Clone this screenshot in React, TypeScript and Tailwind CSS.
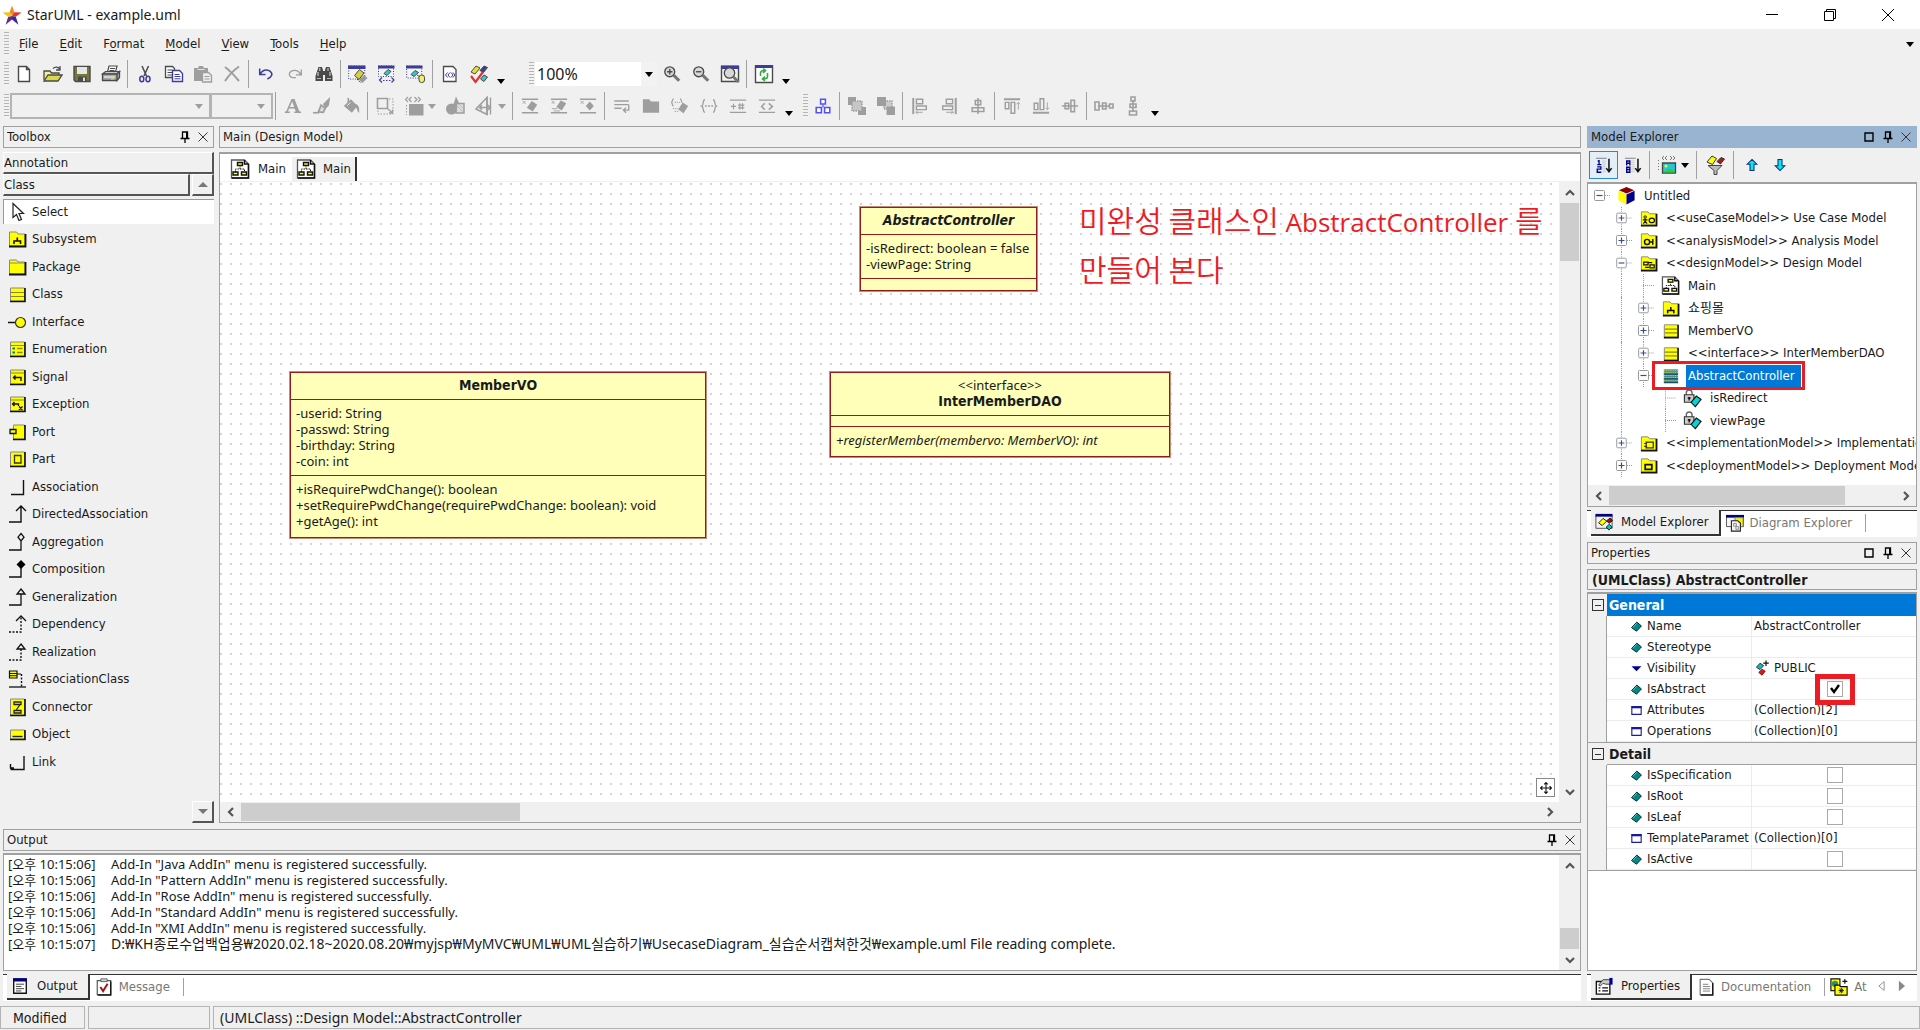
import React from 'react';

/* ---------- icon building blocks ---------- */

type Kids = { children?: React.ReactNode; size?: string };

function Svg({ children, size = 'size-5' }: Kids) {
  return (
    <svg viewBox="0 0 20 20" fill="none" className={`${size} shrink-0`} aria-hidden="true">
      {children}
    </svg>
  );
}

const G = '#9e9e9e';
const D = '#4a4a4a';
const N = '#3c3c9c';
const Y = '#ffff00';

const icons: Record<string, React.ReactNode> = {
  new: <path d="M4.5 2.5h8l3 3v12h-11zM12.5 2.5v3h3" fill="#fff" stroke={D} strokeWidth="1.4" />,
  open: (
    <>
      <path d="M1 16V7h6l1.5 2H16v3" fill="#f2ee9a" stroke={D} strokeWidth="1.3" />
      <path d="M1 17l4-6h14l-4 6z" fill="#d8d84a" stroke={D} strokeWidth="1.3" />
      <path d="M10 4.500c2-2 5-2 6.500.5M17 2v4h-4" stroke={D} strokeWidth="1.3" />
    </>
  ),
  save: (
    <>
      <path d="M2 2.500h16v15H3.500L2 16z" fill="#77773c" stroke={D} strokeWidth="1.4" />
      <path d="M5 3h10v7H5z" fill="#e6e6e6" />
      <path d="M6 12.500h8.500V17H6z" fill={D} />
      <path d="M11 13.500h2V17h-2z" fill="#ddd" />
    </>
  ),
  print: (
    <>
      <path d="M6.500 8l1.500-6h8l-1.500 6z" fill="#fff" stroke={D} strokeWidth="1.2" />
      <path d="M9 4.500h5M8.500 6.500h5" stroke={D} />
      <path d="M1.500 10l3-2.500h14L16 10z" fill="#c8c8c8" stroke={D} strokeWidth="1.2" />
      <path d="M1.500 10h14.500v6.500H1.500zM16 10l2.500-2.500v6L16 16.500z" fill="#a8a8a8" stroke={D} strokeWidth="1.3" />
      <path d="M3 13h11" stroke="#eee" strokeWidth="1.200" />
      <path d="M10 14.800h3" stroke="#d8d83a" strokeWidth="1.500" />
    </>
  ),
  cut: (
    <>
      <path d="M7 2l4.500 10M13.500 2L9 12" stroke={D} strokeWidth="1.500" />
      <ellipse cx="6.800" cy="15" rx="2" ry="2.800" stroke={N} strokeWidth="1.500" />
      <ellipse cx="13" cy="15" rx="2" ry="2.800" stroke={N} strokeWidth="1.500" />
    </>
  ),
  copy: (
    <>
      <path d="M1.500 2.500h7l2 2v9h-9z" fill="#fff" stroke={D} strokeWidth="1.300" />
      <path d="M3.500 6h5M3.500 8.500h5M3.500 11h5" stroke={D} />
      <path d="M8.500 6.500h7l3 3v8h-10z" fill="#fff" stroke={N} strokeWidth="1.400" />
      <path d="M10.500 10.500h5M10.500 12.500h6M10.500 14.800h6" stroke={N} />
    </>
  ),
  paste: (
    <>
      <path d="M1 4h4l1-2h4l1 2h4v13H1z" fill={G} />
      <path d="M4.500 5.500h7" stroke="#e4e4e4" />
      <path d="M9.500 8.500h6l3 3v6.500h-9z" fill="#ececec" stroke={G} strokeWidth="1.300" />
      <path d="M11.500 12.500h5M11.500 15h5" stroke={G} />
    </>
  ),
  delete: <path d="M3 3c4 3 9 8 14 14M17 2.500C12 6 7 11 3 17" stroke={G} strokeWidth="2" />,
  undo: <path d="M3 4v6.500h6.500M3.500 10C6 6 10 4.500 14 6.500c4.500 3 2.500 7-2.500 9" stroke={N} strokeWidth="1.700" />,
  redo: <path d="M17 5v6h-6M16.500 10.500C14 6.500 10 5 6 6.800c-3.500 2-3 6 1 7.200h4" stroke={G} strokeWidth="1.500" />,
  find: (
    <>
      <path d="M4.500 3h3.500l1 3v11H1.500v-5zM15.500 3H12l-1 3v11h7.500v-5z" fill={D} />
      <path d="M8 7h4v4H8z" fill={D} />
      <path d="M4 8v4M16 8v4M5.800 4v3M14 4v3" stroke="#ddd" />
      <path d="M3 14.500h4M13 14.500h4" stroke="#bbb" />
    </>
  ),
  win1: (
    <>
      <path d="M.7 2h16v13H.7z" fill="#f4f4f4" stroke={N} strokeDasharray="1 1.500" />
      <path d="M0 1.500h17.500V5H0z" fill={N} />
      <path d="M11 16l5-5 3.500 3-5 5z" fill="#9a9a9a" />
      <path d="M6.500 11.500l5-6 4.500 3.500-5 6.500z" fill="#d6d13c" stroke={D} />
      <path d="M9 15l4 4" stroke={D} strokeDasharray="1.500 1" />
    </>
  ),
  win2: (
    <>
      <path d="M1.500 2h15v10.500h-15z" fill="#f4f4f4" stroke={N} strokeDasharray="1 1.500" />
      <path d="M1 1.500h16.500V4.500H1z" fill={N} />
      <path d="M7 9.500l4-4 3 2-4 4z" fill="#3ec6c6" stroke={D} />
      <path d="M5 13.500l-2.500 2.500L5 18.500M14.500 13.500L17 16l-2.500 2.500" stroke={N} strokeWidth="1.200" />
      <path d="M6 16.500h8" stroke={N} strokeDasharray="1.500 1.500" />
    </>
  ),
  win3: (
    <>
      <path d="M.7 2h15v12H.7z" fill="#f4f4f4" stroke={N} strokeDasharray="1 1.500" />
      <path d="M0 1.500h16.500V4.500H0z" fill={N} />
      <path d="M5 10.500l4-4 3.500 2-4.500 4z" fill="#3ec6c6" stroke={D} />
      <path d="M11 11l6 4" stroke={D} />
      <rect x="13" y="11" width="5.500" height="7.500" rx="2.500" fill="#f1ee6a" stroke={D} />
    </>
  ),
  doc: (
    <>
      <path d="M3.500 2.500h9.500l3 3v12H3.500z" fill="#fff" stroke={D} strokeWidth="1.300" />
      <path d="M7.500 8.500L5.500 11l2 2.500M10 8.500L8 11l2 2.500M11 8.500l2 2.500-2 2.500M13 8.500l2 2.500-2 2.500" stroke={N} />
    </>
  ),
  verify: (
    <>
      <path d="M2 8l5-6 4 2-5 6z" fill="#e5e02e" stroke={D} />
      <path d="M11 6.500l4-4.500 3.500 1.500-4 5z" fill={N} stroke={D} />
      <path d="M11.500 15l3.500-4 3.500 2-3.500 4.500z" fill="#3ec6c6" stroke={D} />
      <path d="M2 12l4.500 6L14 8" stroke="#e03030" strokeWidth="2.200" />
    </>
  ),
  zoomin: (
    <>
      <circle cx="7.500" cy="7.500" r="5.500" fill="#d8d8d8" stroke={D} strokeWidth="1.500" />
      <path d="M4.500 7.500h6M7.500 4.500v6" stroke={D} strokeWidth="1.500" />
      <path d="M12 11.500l6 6" stroke="#777" strokeWidth="3.500" />
    </>
  ),
  zoomout: (
    <>
      <circle cx="7.500" cy="7.500" r="5.500" fill="#d8d8d8" stroke={D} strokeWidth="1.500" />
      <path d="M4.500 7.500h6" stroke={D} strokeWidth="1.500" />
      <path d="M12 11.500l6 6" stroke="#777" strokeWidth="3.500" />
    </>
  ),
  zoomfit: (
    <>
      <path d="M1.500 2.500h17v15h-17z" fill="#f4f4f4" stroke={D} strokeWidth="1.400" />
      <path d="M1 1.500h18V5H1z" fill={N} />
      <circle cx="9.500" cy="9" r="5.200" fill="#d8d8d8" stroke={D} strokeWidth="1.300" />
      <path d="M13.500 13l5 5" stroke="#777" strokeWidth="3" />
    </>
  ),
  refresh: (
    <>
      <path d="M1.500 2h17v16.500h-17z" fill="#fff" stroke={D} strokeWidth="1.400" />
      <path d="M1 1h18v3H1z" fill={N} />
      <path
        d="M6.500 12V9c0-2 2-2.500 4-2.500M9 4.500l2.500 2L9 9M13.500 9v3.500c0 2-2 2.500-4 2.500M11 12.500L8.500 15l2.500 2"
        stroke="#35a845"
        strokeWidth="1.600"
      />
    </>
  ),
  font: (
    <>
      <path d="M3 17L9 3h2l5.500 14M6 12h8" stroke={G} strokeWidth="1.800" />
      <path d="M10 3l5 14" stroke={G} strokeWidth="3" />
      <path d="M1 17h5.500M11.500 17h7.500" stroke={G} strokeWidth="1.800" />
    </>
  ),
  pen: (
    <>
      <path d="M12 8l6-6-1 7-3 3z" fill={G} stroke={G} strokeWidth="1.500" />
      <path d="M9 9l4.500 3.500-2 4.500-5.500-.5z" fill="#ddd" stroke={G} strokeWidth="2" />
      <path d="M0 17.500h7" stroke={G} strokeWidth="1.800" />
    </>
  ),
  bucket: (
    <>
      <path d="M2 10l8-7.500 7 7.500-6 7.500z" fill={G} />
      <path d="M7 1v8" stroke={G} strokeWidth="1.800" />
      <path d="M15 8c3 1 4 3.500 3.500 9L16 11z" fill={G} stroke={G} />
      <path d="M5.500 10l4-4" stroke="#eee" />
    </>
  ),
  resize: (
    <>
      <path d="M2.500 2.500h10v10h-10z" stroke={G} strokeWidth="1.600" />
      <path d="M14 3h4v15H3v-4" stroke={G} strokeDasharray="1.500 1.500" />
      <path d="M13 13l4.500 4M17.500 13.500V17H14" stroke={G} strokeWidth="1.300" />
    </>
  ),
  stereo: (
    <>
      <path
        d="M4 1L1.500 3.500 4 6M7.500 1L5 3.500 7.500 6M10.500 1L13 3.500 10.500 6M14 1l2.500 2.500L14 6"
        stroke={G}
        strokeWidth="1.200"
      />
      <path d="M5 8h14.500v11.500H5z" fill={G} />
      <path d="M2.500 9v10" stroke={G} strokeDasharray="1.500 1.500" />
    </>
  ),
  shapes: (
    <>
      <circle cx="6.500" cy="13" r="5.500" fill={G} />
      <path d="M11 .5l5 10.500H7.500z" fill={G} />
      <path d="M11.500 7.500h7.500V17h-8z" fill="#ddd" stroke={G} strokeWidth="1.500" />
      <path d="M12 10l6 6M14 8.500l4 4" stroke={G} strokeDasharray="1 1" />
    </>
  ),
  rotate: (
    <>
      <path d="M13 1.500L2 13l11 5.500z" stroke={G} strokeWidth="1.600" />
      <path d="M13 1v18" stroke={G} strokeWidth="1.600" />
      <path d="M16.500 1.500v17" stroke={G} strokeWidth="1.400" />
      <path d="M6 11.500h10M8 9l-2.500 2.500L8 14M14 9l2.500 2.500L14 14" stroke={G} strokeWidth="1.400" />
    </>
  ),
  sup1: (
    <>
      <path d="M1 2.500h18M1 17.500h18" stroke={G} strokeWidth="1.500" />
      <path d="M2 4.500l3 3M5 4.500l-3 3" stroke={G} />
      <path d="M6.500 12l5.500-7.500 6 4-5 7.500z" fill={G} />
    </>
  ),
  sup2: (
    <>
      <path d="M1 2.500h18M1 17.500h18" stroke={G} strokeWidth="1.500" />
      <path d="M2 4.500l3 3M5 4.500l-3 3M2 13h6M4 15.500h7" stroke={G} />
      <path d="M7 11l5-7 6 3-5 8z" fill={G} />
    </>
  ),
  sup3: (
    <>
      <path d="M1 2.500h18M1 17.500h18" stroke={G} strokeWidth="1.500" />
      <path d="M2 4.500l3 3M5 4.500l-3 3" stroke={G} />
      <path d="M12 5l4.500 5-4.500 5-4.500-5z" fill={G} />
    </>
  ),
  wrap: (
    <>
      <path d="M1.500 4.500h16M1.500 8.500h16M1.500 12.500h8" stroke={G} strokeWidth="1.600" />
      <path d="M17.500 8.500v6h-5M14.500 12l-3 2.500 3 3" stroke={G} strokeWidth="1.500" />
    </>
  ),
  folder: <path d="M1 17.500V2.500h7l2 2.500h9v12.500z" fill={G} />,
  compart: (
    <>
      <path d="M3 2c-2 0-1 3-2.500 4C2 7 1 10 3 10M10 2c2 0 1 3 2.500 4" stroke={G} strokeWidth="1.300" />
      <path d="M4 6h6M2 13h6M4 16h5" stroke={G} strokeDasharray="1.500 1" />
      <path d="M8 14l5-8 6 4-5 8z" fill={G} />
    </>
  ),
  braces: (
    <>
      <path
        d="M5.500 3c-3 0-1 6-3.500 7 2.500 1 .5 7 3.500 7M14.500 3c3 0 1 6 3.500 7-2.500 1-.5 7-3.500 7"
        stroke={G}
        strokeWidth="1.500"
      />
      <path d="M5.500 10h9" stroke={G} strokeWidth="1.500" strokeDasharray="2 1.500" />
    </>
  ),
  plusid: (
    <>
      <path d="M1 3.500h18M1 17h18" stroke={G} strokeWidth="1.500" />
      <path d="M2 10.500h6M5 7.500v6M10 9h7M10 12h7M12 7v7M15 7v7" stroke={G} strokeWidth="1.300" />
    </>
  ),
  chev: (
    <>
      <path d="M1 3.500h18M1 17h18" stroke={G} strokeWidth="1.500" />
      <path d="M7.500 7L4 10.500 7.500 14M12 7l4 3.500-4 3.500" stroke={G} strokeWidth="1.700" />
    </>
  ),
  tree: (
    <>
      <path d="M7 1.500h6v6H7zM1.500 12h6.500v6.500H1.500zM12 12h6.500v6.500H12z" fill="#fff" stroke="#5050ff" strokeWidth="1.900" />
      <path d="M10 8v4" stroke="#5050ff" strokeWidth="1.500" />
    </>
  ),
  front: (
    <>
      <path d="M1 1h8v8H1zM11 11h8v8h-8z" fill={G} />
      <path d="M5 5h10v10H5z" fill="#c6c6c6" stroke={G} strokeWidth="1.500" strokeDasharray="1.500 1" />
    </>
  ),
  back: (
    <>
      <path d="M8 5h8v8H8z" fill="#ccc" stroke={G} strokeWidth="1.500" strokeDasharray="1.500 1" />
      <path d="M1 1h9v9H1zM10.500 10.500H19V19h-8.500z" fill={G} />
    </>
  ),
  aleft: (
    <>
      <path d="M2.500 1v18" stroke={G} strokeWidth="2.200" />
      <path d="M6 2.500h7v5H6zM6 10h11v4H6z" stroke={G} strokeWidth="1.600" />
      <path d="M5 17h8M7.500 15l-2 2 2 2" stroke={G} />
    </>
  ),
  aright: (
    <>
      <path d="M17.500 1v18" stroke={G} strokeWidth="2.200" />
      <path d="M7 2.500h7v5H7zM3 10h11v4H3z" stroke={G} strokeWidth="1.600" />
      <path d="M7 17h8M12.500 15l2 2-2 2" stroke={G} />
    </>
  ),
  acenter: <path d="M10 1v18M7 4h6v4.500H7zM3.500 12h13v4h-13z" fill="#eee" stroke={G} strokeWidth="1.700" />,
  atop: (
    <>
      <path d="M1 2.500h18" stroke={G} strokeWidth="2.200" />
      <path d="M2.500 6v7h4V6zM9 6v12h4V6z" stroke={G} strokeWidth="1.600" />
      <path d="M17 14V6M15 8l2-2 2 2" stroke={G} />
    </>
  ),
  abottom: (
    <>
      <path d="M1 17.500h18" stroke={G} strokeWidth="2.200" />
      <path d="M2.500 7v7h4V7zM9 2v12h4V2z" stroke={G} strokeWidth="1.600" />
      <path d="M17 6v8M15 12l2 2 2-2" stroke={G} />
    </>
  ),
  amiddle: <path d="M1 10h18M4.500 7h4v6h-4zM11 3.500h4v13h-4z" fill="#eee" stroke={G} strokeWidth="1.700" />,
  dhor: <path d="M4 10h12M1 6h4v8H1zM8.500 7h3.500v6H8.500zM15.500 8h3.500v4h-3.500z" fill="#eee" stroke={G} strokeWidth="1.600" />,
  dver: <path d="M10 4v12M8 1h4v4H8zM7 8h6v3.500H7zM6.500 15h7v4h-7z" fill="#eee" stroke={G} strokeWidth="1.600" />,

  /* toolbox */
  select: <path d="M6 1.500v14l3.500-3 2.500 6 2.500-1-2.500-6h4.500z" fill="#fff" stroke="#222" strokeWidth="1.200" />,
  subsystem: (
    <>
      <path d="M2.500 17V3h7l1.500 2h7v12z" fill={Y} stroke="#888" />
      <path d="M2 17.500h16.500V5" stroke="#111" strokeWidth="1.800" />
      <path d="M7 15v-3h6.500v3M10.300 12V8.500" stroke="#111" strokeWidth="1.600" />
    </>
  ),
  package: (
    <>
      <path d="M2.500 17V3h7l1.500 2h7v12z" fill={Y} stroke="#888" />
      <path d="M3 6h15" stroke="#888" />
      <path d="M2 17.500h16.500V5" stroke="#111" strokeWidth="1.800" />
    </>
  ),
  class: (
    <>
      <path d="M3.500 4h14v13h-14z" fill={Y} stroke="#888" />
      <path d="M4 8.500h13M4 12.500h13" stroke="#8a8a20" strokeWidth="1.200" />
      <path d="M3 17.500h15V4" stroke="#111" strokeWidth="1.600" />
    </>
  ),
  classsel: (
    <>
      <path d="M3 3.500h15v14H3z" fill="#3f8f8f" />
      <path d="M3 5h15M3 7h15M3 12h15M3 10h15M3 15h15" stroke="#e2e25a" strokeDasharray="1 1" />
      <path d="M3 8.500h15M3 13.500h15M3 17.500h15" stroke="#1c4a6a" strokeWidth="1.200" />
    </>
  ),
  interface: (
    <>
      <path d="M1 10.500h7" stroke="#111" strokeWidth="1.500" />
      <circle cx="13.500" cy="10.500" r="5" fill={Y} stroke="#333" strokeWidth="1.200" />
    </>
  ),
  enumeration: (
    <>
      <path d="M3.500 3h14v14h-14z" fill={Y} stroke="#888" />
      <path d="M4 6.500h13" stroke="#8a8a20" />
      <path d="M5.500 9.500H8M5.500 13.500H8" stroke="#008080" strokeWidth="2" />
      <path d="M10 9.500h5.500M10 13.500h5.500" stroke="#8a8a20" strokeWidth="1.400" />
      <path d="M3 17.500h15V3" stroke="#111" strokeWidth="1.600" />
    </>
  ),
  signal: (
    <>
      <path d="M3.500 3h14v14h-14z" fill={Y} stroke="#888" />
      <path d="M4 6h13" stroke="#8a8a20" />
      <path d="M3 17.500h15V3" stroke="#111" strokeWidth="1.600" />
      <path d="M14 14v-3.500H7M8.500 8.500l-2 2 2 2" stroke="#111" strokeWidth="1.400" />
    </>
  ),
  exception: (
    <>
      <path d="M3.500 3h14v14h-14z" fill={Y} stroke="#888" />
      <path d="M4 6h13" stroke="#8a8a20" />
      <path d="M3 17.500h15V3" stroke="#111" strokeWidth="1.600" />
      <path d="M11.500 12v-2H6M7.500 8l-2 2 2 2M12 12.500l3.500 3.500M15.500 12.500L12 16" stroke="#111" strokeWidth="1.300" />
    </>
  ),
  port: (
    <>
      <path d="M6.500 3h11v14h-11z" fill={Y} stroke="#888" />
      <path d="M6 17.500h12V3" stroke="#111" strokeWidth="1.600" />
      <path d="M3 7.500h6v4H3z" fill={Y} stroke="#111" strokeWidth="1.300" />
    </>
  ),
  part: (
    <>
      <path d="M3.500 3h14v14h-14z" fill={Y} stroke="#888" />
      <path d="M3 17.500h15V3" stroke="#111" strokeWidth="1.600" />
      <path d="M7.500 6.500h6.500V14H7.500z" stroke="#333" strokeWidth="1.300" />
    </>
  ),
  association: <path d="M4 17.500h12.500V3" stroke="#111" strokeWidth="1.400" />,
  directed: <path d="M2 18h12V3M9 7l5-5 5 5" stroke="#111" strokeWidth="1.400" />,
  aggregation: <path d="M2 18h12V9M14 1.500l3 3.700-3 3.700-3-3.700z" stroke="#111" strokeWidth="1.300" />,
  composition: (
    <>
      <path d="M2 18h12V9" stroke="#111" strokeWidth="1.400" />
      <path d="M14 1l4.500 4.500L14 10 9.500 5.500z" fill="#000" />
    </>
  ),
  generalization: <path d="M2 18h12V7M14 2l4 5h-8z" stroke="#111" strokeWidth="1.300" />,
  dependency: (
    <>
      <path d="M2 18h12V3" stroke="#111" strokeWidth="1.400" strokeDasharray="2 1.500" />
      <path d="M9 7l5-5 5 5" stroke="#111" strokeWidth="1.300" />
    </>
  ),
  realization: (
    <>
      <path d="M2 18h12V7" stroke="#111" strokeWidth="1.400" strokeDasharray="2 1.500" />
      <path d="M14 2l4 5h-8z" stroke="#111" strokeWidth="1.300" />
    </>
  ),
  assocclass: (
    <>
      <path d="M2.500 2h7.500v7H2.500z" fill={Y} stroke="#111" strokeWidth="1.200" />
      <path d="M3 4.500h7M3 6.700h7M10 5h4" stroke="#111" />
      <path d="M14.500 5v13" stroke="#111" strokeWidth="1.400" strokeDasharray="2 1.500" />
      <path d="M2 18h17" stroke="#111" strokeWidth="1.300" />
    </>
  ),
  connector: (
    <>
      <path d="M3.500 2h14v16h-14z" fill={Y} stroke="#888" />
      <path d="M3 18.500h15V2" stroke="#111" strokeWidth="1.600" />
      <path d="M7 5h7v2.500H7zM7 13.500h7V16H7zM13 7.500l-4 6" stroke="#222" strokeWidth="1.300" />
    </>
  ),
  object: (
    <>
      <path d="M3.500 6h14v9h-14z" fill={Y} stroke="#888" />
      <path d="M3 15.500h15V6" stroke="#111" strokeWidth="1.600" />
      <path d="M5.500 12.500h10" stroke="#222" strokeWidth="1.400" />
    </>
  ),
  link: <path d="M3.500 17.500H17V4M3.500 12v4H7" stroke="#111" strokeWidth="1.400" />,

  /* documents, tabs and explorer */
  diagram: (
    <>
      <path d="M1.500 1h13l4 4v14h-17z" fill="#fff" stroke="#555" strokeWidth="1.300" />
      <path d="M14.500 1v4h4M18.500 5v14H2" stroke="#111" strokeWidth="1.500" />
      <path d="M10 6v4M5.500 13v-3h9v3" stroke="#111" strokeDasharray="1.500 1" />
      <path d="M7.500 3.500h5v3h-5zM3 13h5v3H3zM11.500 13h5v3h-5z" fill={Y} stroke="#111" strokeWidth="1.400" />
    </>
  ),
  cube: (
    <>
      <path d="M10 1l8 3.500-8 3.500-8-3.500z" fill="#8b0000" />
      <path d="M1.500 5L10 9v10.500l-8.500-4.500z" fill={Y} />
      <path d="M18.500 5L10 9v10.500l8.500-4.500z" fill="#00008b" />
    </>
  ),
  ucm: (
    <>
      <path d="M2.500 17V3h7l1.500 2h7v12z" fill={Y} stroke="#888" />
      <path d="M2 17.500h16.500V5" stroke="#111" strokeWidth="1.800" />
      <circle cx="6.500" cy="8.500" r="1.300" stroke="#111" />
      <path d="M6.500 10v3M4 11.500h5M6.500 13L4.500 15.500M6.500 13l2 2.500" stroke="#111" strokeWidth="1.200" />
      <ellipse cx="13.500" cy="12" rx="2.800" ry="2.300" stroke="#111" strokeWidth="1.300" />
    </>
  ),
  anm: (
    <>
      <path d="M2.500 17V3h7l1.500 2h7v12z" fill={Y} stroke="#888" />
      <path d="M2 17.500h16.500V5" stroke="#111" strokeWidth="1.800" />
      <circle cx="8.500" cy="11.500" r="2.700" stroke="#111" strokeWidth="1.500" />
      <path d="M11 11.500h3.500M14.500 8.500v6" stroke="#111" strokeWidth="1.500" />
    </>
  ),
  dsm: (
    <>
      <path d="M2.500 17V3h7l1.500 2h7v12z" fill={Y} stroke="#888" />
      <path d="M2 17.500h16.500V5" stroke="#111" strokeWidth="1.800" />
      <path d="M5 8.500h4.500v3H5zM11.500 11.500H16v3h-4.500zM9.500 9h4.500M6.500 14h4" stroke="#111" strokeWidth="1.300" />
    </>
  ),
  imm: (
    <>
      <path d="M2.500 17V3h7l1.500 2h7v12z" fill={Y} stroke="#888" />
      <path d="M2 17.500h16.500V5" stroke="#111" strokeWidth="1.800" />
      <path d="M7.500 8.500H15v6H7.500zM5.500 10h3M5.500 13h3" stroke="#333" strokeWidth="1.300" />
    </>
  ),
  dpm: (
    <>
      <path d="M2.500 17V3h7l1.500 2h7v12z" fill={Y} stroke="#888" />
      <path d="M2 17.500h16.500V5" stroke="#111" strokeWidth="1.800" />
      <path d="M6.500 9h7v5h-7z" stroke="#111" strokeWidth="1.800" />
    </>
  ),
  attr: (
    <>
      <path d="M3.500 7V4c0-4 6-4 6 0V7" stroke="#666" strokeWidth="1.500" />
      <path d="M1.500 6h10v8h-10z" fill="#ccc" stroke="#333" strokeWidth="1.200" />
      <path d="M6.500 8.500v3.500M5 9.500h3" stroke="#111" strokeWidth="1.400" />
      <path d="M8.500 14l5.500-6.500 5 3.500-6 7.500z" fill="#00d8d8" stroke="#111" strokeWidth="1.200" />
    </>
  ),
  mexp: (
    <>
      <path d="M1 3h18v14H1z" fill="#f4f4f4" stroke="#444" />
      <path d="M.5 1h19v3H.5z" fill="#000080" />
      <path d="M4 11l5-5 4 3-5 5z" fill={Y} stroke="#111" />
      <path d="M13 8.500l4-3 2.500 3-4 3z" fill="#a01010" stroke="#111" />
      <path d="M12.500 15.500l3.500-3 3 3-3.500 3.500z" fill="#00c8c8" stroke="#111" />
    </>
  ),
  dexp: (
    <>
      <path d="M.5 3h19v11H.5z" fill="#f4f4f4" stroke="#444" />
      <path d="M0 1h20v3H0z" fill="#000080" />
      <path d="M10 4h9v10h-9z" fill="#f6f200" stroke="#777" />
      <path d="M6 7.500h7l3 2.500v9H6z" fill="#f2f2f2" stroke="#222" strokeWidth="1.200" />
      <path d="M8.500 10.500h3v3h-3zM11 14h3v3h-3z" stroke="#888" />
    </>
  ),
  out: (
    <>
      <path d="M3 2h14v16H3z" fill="#fff" stroke="#111" strokeWidth="1.500" />
      <path d="M2.500 1.500h15v3.500h-15z" fill="#000080" />
      <path d="M5.500 8h9M5.500 10.500h6M5.500 13h9M5.500 15.500h6" stroke="#333" />
    </>
  ),
  msg: (
    <>
      <path d="M2.500 3h15v15.500h-15z" fill="#fff" stroke="#555" strokeWidth="1.300" />
      <path d="M17.500 4v15H3" stroke="#111" strokeWidth="1.500" />
      <path d="M6.500 1h7v3h-7z" fill="#ddd" stroke="#555" />
      <path d="M6 10l3 4.500L14 6.500" stroke="#a01818" strokeWidth="2.200" />
    </>
  ),
  props: (
    <>
      <path d="M1.500 5h15v14h-15z" fill="#fff" stroke="#111" strokeWidth="1.500" />
      <path d="M4 12h2M4 15.500h2M8 12h6.500M8 15.500h6.500" stroke="#111" strokeWidth="1.400" />
      <path d="M4 9l5-6h8v5h-5l-3-1-3 3z" fill="#ccc" stroke="#333" />
      <path d="M16 1h3.500v7.500H16z" fill="#000090" />
    </>
  ),
  documentation: (
    <>
      <path d="M3.500 1.500h10l4 4v13h-14z" fill="#fff" stroke="#777" strokeWidth="1.300" />
      <path d="M17.500 5.500v13.500H4" stroke="#111" strokeWidth="1.500" />
      <path d="M6.500 7h6M6.500 9.500h8M6.500 12h8M6.500 14.500h8" stroke="#777" />
    </>
  ),
  attach: (
    <>
      <path d="M1 1h10v13H1z" fill={Y} stroke="#111" strokeWidth="1.300" />
      <circle cx="5.500" cy="6.500" r="3.500" fill="#2d8a7a" />
      <path d="M5.500 10V8h5l1 1.500h7.500v9.500H5.500z" fill={Y} stroke="#111" strokeWidth="1.300" />
      <path d="M12.500 11v6M9.500 14h6M10.500 12l4 4M14.500 12l-4 4" stroke="#000080" />
      <path d="M16.500 1v5.500M13.800 3.800h5.500" stroke="#111" strokeWidth="1.300" />
    </>
  ),
  sort12: (
    <>
      <path d="M1 2.500h12" stroke="#777" />
      <path d="M4.500 4.500v5M3 5.500h1.500M2.500 9.500H7M2.500 12h4v2.500h-4V18H7" stroke="#000090" strokeWidth="1.500" />
      <path d="M9 5v13M11 5v13" stroke="#aaa" strokeDasharray="1 1" />
      <path d="M15.500 3v14M12.500 13.500l3 4 3-4" stroke="#111" strokeWidth="1.700" />
    </>
  ),
  sortab: (
    <>
      <path d="M1 2.500h12" stroke="#777" />
      <path d="M3 10.500V5.500h3.500v5M3 8h3.500M3 12.500h3.500V18H3zM3 15h3.500" stroke="#000090" strokeWidth="1.500" />
      <path d="M9 5v13M11 5v13" stroke="#aaa" strokeDasharray="1 1" />
      <path d="M15.500 3v14M12.500 13.500l3 4 3-4" stroke="#111" strokeWidth="1.700" />
    </>
  ),
  view: (
    <>
      <path d="M7 1L5 3l2 2M10 1L8 3l2 2M13 1l2 2-2 2M16 1l2 2-2 2" stroke="#777" />
      <path d="M1.500 5v12" stroke="#777" strokeDasharray="1 2" />
      <path d="M5.500 8h13v10h-13z" fill="#20c8d8" stroke="#444" strokeWidth="1.300" />
      <path d="M6 17.500l6-4 6 2.500v1.500z" fill="#38c838" />
      <circle cx="9" cy="11" r="1.500" fill="#ffee20" />
    </>
  ),
  filter: (
    <>
      <path d="M3 10.500h14l-5 5v4h-3v-4z" fill="#bbb" stroke="#444" />
      <path d="M2 7l5-6 4.500 2.500-4 6z" fill={Y} stroke="#333" />
      <path d="M12 6.500l4-4 3.500 1.500-4 5z" fill="#b01818" stroke="#333" />
    </>
  ),
  up: <path d="M10 3l6 6h-3.500v8h-5V9H4z" fill="#00e8f0" stroke="#10307a" strokeWidth="1.300" />,
  down: <path d="M10 17l6-6h-3.500V3h-5v8H4z" fill="#00e8f0" stroke="#10307a" strokeWidth="1.300" />,
  star: (
    <>
      <path d="M10 .5l2.400 6.800L10 11 7.600 7.300z" fill="#f08a1c" />
      <path d="M12.400 7.300l7.100.1-5.700 4.300L10 11z" fill="#e8332a" />
      <path d="M13.800 11.700l2.600 8L10 14.500V11z" fill="#3a2a9c" />
      <path d="M10 14.500l-6.400 5.200 2.600-8L10 11z" fill="#6a2a8c" />
      <path d="M6.200 11.700L.5 7.400l7.100-.1L10 11z" fill="#f5c21c" />
    </>
  ),
  pub: (
    <>
      <path d="M3 9l4.500-5L12 7l-4.500 5z" fill="#00c0c0" stroke="#111" />
      <path d="M6 15.500l4-4 4 2.500-4 5z" fill="#e01818" stroke="#600" />
      <path d="M15 .5v7M11.500 4h7" stroke="#111" strokeWidth="1.500" />
    </>
  ),
  diamond: (
    <>
      <path d="M1 12L10.500 2 19 9l-9 9.500z" fill="#008a8a" stroke="#0a2a2a" strokeWidth="1.800" />
      <path d="M3.500 11.500l7-7.500" stroke="#60c8c8" strokeWidth="1.800" />
    </>
  ),
  coll: (
    <>
      <path d="M1.500 3h17v14h-17z" fill="#fff" stroke="#1a1aa0" strokeWidth="2" />
      <path d="M1 2h18v4H1z" fill="#1a1aa0" />
    </>
  ),
  tri: <path d="M1 6h18l-9 9z" fill="#000090" />,
  move: <path d="M10 1v18M1 10h18M7 4l3-3 3 3M7 16l3 3 3-3M4 7l-3 3 3 3M16 7l3 3-3 3" stroke="#111" strokeWidth="1.800" />,
};

const Icon = ({ n, size }: { n: string; size?: string }) => <Svg size={size}>{icons[n]}</Svg>;

/* ---------- small shared parts ---------- */

const Grip = () => (
  <div className="h-6 w-[5px] shrink-0 bg-[repeating-linear-gradient(#b4b4b4_0_1px,#f2f2f2_1px_3px)]" />
);

const Sep = () => <div className="mx-[2px] h-7 w-px shrink-0 bg-[#a0a0a0]" />;

const Caret = ({ color = 'text-black' }: { color?: string }) => (
  <svg viewBox="0 0 8 5" className={`h-[5px] w-2 shrink-0 ${color}`} aria-hidden="true">
    <path d="M0 0h8L4 5z" fill="currentColor" />
  </svg>
);

const ToolButton = ({ n, label, size = 'size-5' }: { n: string; label?: string; size?: string }) => (
  <button type="button" aria-label={label ?? n} className="flex h-7 w-[29px] shrink-0 items-center justify-center">
    <Icon n={n} size={size} />
  </button>
);

const MoreButton = () => (
  <button type="button" aria-label="More buttons" className="flex h-7 w-4 shrink-0 items-end justify-center pb-1">
    <Caret />
  </button>
);

const SplitButton = ({ n }: { n: string }) => (
  <button type="button" aria-label={n} className="flex h-7 w-[41px] shrink-0 items-center justify-center gap-1">
    <Icon n={n} />
    <Caret color="text-[#9e9e9e]" />
  </button>
);

const PinIcon = () => (
  <svg viewBox="0 0 12 12" className="size-3" fill="none" aria-hidden="true">
    <path d="M3.500 1h5v6.500h-5zM1.500 7.500h9M6 7.500V12" stroke="#000" strokeWidth="1.300" />
    <path d="M7 1h1.800v6.500H7z" fill="#000" />
  </svg>
);
const CloseIcon = () => (
  <svg viewBox="0 0 10 10" className="size-[10px]" fill="none" aria-hidden="true">
    <path d="M.5.5l9 9M9.500.5l-9 9" stroke="#333" />
  </svg>
);

function PanelHeader({ title, box, pin, active }: { title: string; box?: boolean; pin?: boolean; active?: boolean }) {
  return (
    <div
      className={`flex h-[22px] shrink-0 items-center gap-[7px] border pl-[3px] pr-[5px] ${
        active ? 'border-[#99b4d1] bg-[#99b4d1]' : 'border-[#a0a0a0] bg-[#f0f0f0]'
      }`}
    >
      <h2 className="flex-1 truncate">{title}</h2>
      {box && (
        <button type="button" aria-label="Maximize" className="flex size-3 items-center justify-center">
          <svg viewBox="0 0 10 10" className="size-[10px]" fill="none">
            <path d="M1 1h8v8H1z" stroke="#000" strokeWidth="1.400" />
          </svg>
        </button>
      )}
      {pin && (
        <button type="button" aria-label="Pin">
          <PinIcon />
        </button>
      )}
      {pin && (
        <button type="button" aria-label="Close">
          <CloseIcon />
        </button>
      )}
    </div>
  );
}

const Chevron = ({ d }: { d: string }) => (
  <svg viewBox="0 0 10 10" className="size-[10px]" fill="none" aria-hidden="true">
    <path d={d} stroke="#555" strokeWidth="2.200" />
  </svg>
);
const UP = 'M1 7l4-4 4 4';
const DOWN = 'M1 3l4 4 4-4';
const LEFT = 'M7 1L3 5l4 4';
const RIGHT = 'M3 1l4 4-4 4';

const ScrollCap = ({ d, label }: { d: string; label: string }) => (
  <button type="button" aria-label={label} className="flex size-[21px] shrink-0 items-center justify-center">
    <Chevron d={d} />
  </button>
);

/* ---------- title, menu, toolbars ---------- */

function TitleBar() {
  return (
    <header className="flex h-[29px] shrink-0 items-center bg-white pl-[2px] font-['Noto_Sans','Noto_Sans_CJK_KR',sans-serif] text-[14px]">
      <Icon n="star" />
      <h1 className="flex-1 pl-[5px]">StarUML - example.uml</h1>
      <button type="button" aria-label="Minimize" className="flex h-full w-[58px] items-center justify-center">
        <svg viewBox="0 0 12 12" className="size-3" fill="none">
          <path d="M0 5.500h12" stroke="#000" />
        </svg>
      </button>
      <button type="button" aria-label="Restore" className="flex h-full w-[58px] items-center justify-center">
        <svg viewBox="0 0 12 12" className="size-3" fill="none">
          <path d="M.5 2.500h9v9h-9zM2.500 2.500v-2h9v9h-2" stroke="#000" />
        </svg>
      </button>
      <button type="button" aria-label="Close window" className="mr-[3px] flex h-full w-[58px] items-center justify-center">
        <svg viewBox="0 0 12 12" className="size-3" fill="none">
          <path d="M0 0l12 12M12 0L0 12" stroke="#000" />
        </svg>
      </button>
    </header>
  );
}

const menus: [string, string, string][] = [
  ['', 'F', 'ile'],
  ['', 'E', 'dit'],
  ['F', 'o', 'rmat'],
  ['', 'M', 'odel'],
  ['', 'V', 'iew'],
  ['', 'T', 'ools'],
  ['', 'H', 'elp'],
];

function MenuBar() {
  return (
    <nav className="flex h-[30px] shrink-0 items-center pl-1 pr-[6px]">
      <Grip />
      <div className="flex flex-1 gap-px">
        {menus.map(([a, u, b]) => (
          <button key={u + b} type="button" className="px-[10px]">
            {a}
            <span className="underline underline-offset-2">{u}</span>
            {b}
          </button>
        ))}
      </div>
      <Caret />
    </nav>
  );
}

function Toolbars() {
  return (
    <div className="shrink-0 pb-[3px]">
      <div className="flex h-[30px] items-center pl-1">
        <Grip />
        {['new', 'open', 'save', 'print'].map((n) => (
          <ToolButton key={n} n={n} />
        ))}
        <Sep />
        {['cut', 'copy', 'paste', 'delete'].map((n) => (
          <ToolButton key={n} n={n} />
        ))}
        <Sep />
        {['undo', 'redo', 'find'].map((n) => (
          <ToolButton key={n} n={n} size={n === 'find' ? 'size-5' : 'size-[18px]'} />
        ))}
        <Sep />
        {['win1', 'win2', 'win3'].map((n) => (
          <ToolButton key={n} n={n} />
        ))}
        <Sep />
        {['doc', 'verify'].map((n) => (
          <ToolButton key={n} n={n} />
        ))}
        <MoreButton />
        <div className="w-5" />
        <Grip />
        <div className="ml-px flex h-6 w-[122px] items-center bg-white">
          <input
            aria-label="Zoom"
            defaultValue="100%"
            className="w-[106px] bg-transparent px-[2px] font-['Noto_Sans',sans-serif] text-[16px] outline-none"
          />
          <button type="button" aria-label="Zoom levels" className="flex h-6 w-4 items-center justify-center bg-[#f2f2f2]">
            <Caret />
          </button>
        </div>
        {['zoomin', 'zoomout', 'zoomfit'].map((n) => (
          <ToolButton key={n} n={n} size={n === 'zoomfit' ? 'size-5' : 'size-[18px]'} />
        ))}
        <Sep />
        <ToolButton n="refresh" />
        <MoreButton />
      </div>
      <div className="flex h-[34px] items-center pl-1">
        <Grip />
        {['w-[201px] ml-px', 'w-[63px] -ml-px'].map((w) => (
          <button
            key={w}
            type="button"
            aria-label="Font"
            disabled
            className={`flex h-[26px] shrink-0 items-center justify-end border-2 border-[#b4b4b4] pr-[6px] ${w}`}
          >
            <Caret color="text-[#9e9e9e]" />
          </button>
        ))}
        <Sep />
        {['font', 'pen', 'bucket'].map((n) => (
          <ToolButton key={n} n={n} size="size-[18px]" />
        ))}
        <Sep />
        <ToolButton n="resize" />
        <SplitButton n="stereo" />
        <ToolButton n="shapes" />
        <SplitButton n="rotate" />
        <Sep />
        {['sup1', 'sup2', 'sup3'].map((n) => (
          <ToolButton key={n} n={n} size="size-[18px]" />
        ))}
        <Sep />
        {['wrap', 'folder', 'compart', 'braces', 'plusid', 'chev'].map((n) => (
          <ToolButton key={n} n={n} size="size-[18px]" />
        ))}
        <MoreButton />
        <div className="w-[6px]" />
        <Grip />
        <ToolButton n="tree" size="size-4" />
        <Sep />
        {['front', 'back'].map((n) => (
          <ToolButton key={n} n={n} />
        ))}
        <Sep />
        {['aleft', 'aright', 'acenter'].map((n) => (
          <ToolButton key={n} n={n} size="size-[18px]" />
        ))}
        <Sep />
        {['atop', 'abottom', 'amiddle'].map((n) => (
          <ToolButton key={n} n={n} size="size-[18px]" />
        ))}
        <Sep />
        {['dhor', 'dver'].map((n) => (
          <ToolButton key={n} n={n} />
        ))}
        <MoreButton />
      </div>
    </div>
  );
}

/* ---------- toolbox ---------- */

const tools: [string, string][] = [
  ['select', 'Select'],
  ['subsystem', 'Subsystem'],
  ['package', 'Package'],
  ['class', 'Class'],
  ['interface', 'Interface'],
  ['enumeration', 'Enumeration'],
  ['signal', 'Signal'],
  ['exception', 'Exception'],
  ['port', 'Port'],
  ['part', 'Part'],
  ['association', 'Association'],
  ['directed', 'DirectedAssociation'],
  ['aggregation', 'Aggregation'],
  ['composition', 'Composition'],
  ['generalization', 'Generalization'],
  ['dependency', 'Dependency'],
  ['realization', 'Realization'],
  ['assocclass', 'AssociationClass'],
  ['connector', 'Connector'],
  ['object', 'Object'],
  ['link', 'Link'],
];

const raised = 'border-r-2 border-b-2 border-r-[#555] border-b-[#555] border-t border-l border-t-white border-l-white';

function Toolbox() {
  return (
    <aside className="flex w-[219px] shrink-0 flex-col pl-[3px] pr-[5px]">
      <PanelHeader title="Toolbox" pin />
      <button type="button" className={`mt-1 flex h-[22px] shrink-0 items-center text-left ${raised}`}>
        Annotation
      </button>
      <div className="flex shrink-0 gap-[2px]">
        <button type="button" className={`flex h-[22px] flex-1 items-center text-left ${raised}`}>
          Class
        </button>
        <button type="button" aria-label="Scroll up" className={`flex h-[22px] w-[22px] items-center justify-center ${raised}`}>
          <svg viewBox="0 0 10 5" className="h-[5px] w-[10px]">
            <path d="M0 5h10L5 0z" fill="#777" />
          </svg>
        </button>
      </div>
      <ul className="min-h-0 flex-1 pt-[2px]">
        {tools.map(([n, label], i) => (
          <li key={label} className="flex odd:h-[27px] even:h-7 items-center">
            <button
              type="button"
              className={`flex h-[25px] w-full items-center gap-[5px] ${
                i === 0 ? 'border-t border-l border-[#999] bg-white pl-[3px]' : 'pl-1'
              }`}
            >
              <Icon n={n} />
              <span>{label}</span>
            </button>
          </li>
        ))}
      </ul>
      <button
        type="button"
        aria-label="Scroll down"
        className={`flex h-[22px] w-[22px] shrink-0 items-center justify-center self-end ${raised}`}
      >
        <svg viewBox="0 0 10 5" className="h-[5px] w-[10px]">
          <path d="M0 0h10L5 5z" fill="#777" />
        </svg>
      </button>
    </aside>
  );
}

/* ---------- diagram ---------- */

function ClassBox({
  place,
  name,
  stereotype,
  abstract,
  attrs,
  ops,
}: {
  place: string;
  name: string;
  stereotype?: string;
  abstract?: boolean;
  attrs?: string[];
  ops?: React.ReactNode;
}) {
  return (
    <section
      className={`absolute flex flex-col divide-y divide-[#8f1d1a] border border-[#8f1d1a] bg-[#ffffb9] font-['Noto_Sans',sans-serif] leading-4 whitespace-nowrap text-[#1a1a1a] outline outline-[#c98a80] ${place}`}
    >
      <div className="px-1 pt-1 pb-[6px] text-center">
        {stereotype && <p>{stereotype}</p>}
        <h3 className={`font-['DejaVu_Sans_Condensed',sans-serif] text-[14px] leading-4 font-bold ${abstract ? 'italic' : ''}`}>
          {name}
        </h3>
      </div>
      <div className={attrs ? 'px-[5px] pt-[5px] pb-[6px]' : 'h-[11px]'}>
        {attrs?.map((a) => (
          <p key={a}>{a}</p>
        ))}
      </div>
      <div className="flex-1 px-[5px] pt-[5px]">{ops}</div>
    </section>
  );
}

function DiagramArea() {
  return (
    <main className="flex min-w-0 flex-1 flex-col">
      <PanelHeader title="Main (Design Model)" />
      <div className="mt-1 flex min-h-0 flex-1 flex-col border border-[#a0a0a0] border-t-2 bg-[#f0f0f0]">
        <div className="flex h-7 shrink-0 items-end border-b border-[#f0f0f0] bg-white pl-1" role="tablist">
          <button role="tab" type="button" className="flex h-6 items-center gap-2 px-[6px]">
            <Icon n="diagram" />
            Main
          </button>
          <button
            role="tab"
            type="button"
            aria-selected="true"
            className="flex h-6 items-center gap-[7px] border-r-2 border-[#333] bg-[#f0f0f0] pl-1 pr-1"
          >
            <Icon n="diagram" />
            Main
          </button>
        </div>
        <div className="flex min-h-0 flex-1">
          <div className="relative min-w-0 flex-1 overflow-hidden bg-white bg-[radial-gradient(circle_at_1px_2px,#d4d4d4_1px,transparent_1px)] bg-[length:10px_10px]">
            <ClassBox
              place="left-[640px] top-[25px] h-[84px] w-[177px]"
              name="AbstractController"
              abstract
              attrs={['-isRedirect: boolean = false', '-viewPage: String']}
            />
            <ClassBox
              place="left-[70px] top-[190px] h-[166px] w-[416px]"
              name="MemberVO"
              attrs={['-userid: String', '-passwd: String', '-birthday: String', '-coin: int']}
              ops={
                <>
                  <p>+isRequirePwdChange(): boolean</p>
                  <p>+setRequirePwdChange(requirePwdChange: boolean): void</p>
                  <p>+getAge(): int</p>
                </>
              }
            />
            <ClassBox
              place="left-[610px] top-[190px] h-[85px] w-[340px]"
              name="InterMemberDAO"
              stereotype="<<interface>>"
              ops={<p className="italic">+registerMember(membervo: MemberVO): int</p>}
            />
            <p className="absolute left-[859px] top-[13px] font-['Noto_Sans_CJK_KR',sans-serif] text-[30px] leading-[49px] font-[350] whitespace-nowrap text-[#ed1c24]">
              미완성 클래스인{' '}
              <span className="font-['Open_Sans',sans-serif] text-[26px] leading-none font-normal">AbstractController</span> 를
              <br />
              만들어 본다
            </p>
            <button
              type="button"
              aria-label="Pan"
              className="absolute right-1 bottom-[5px] flex size-[19px] items-center justify-center border border-[#888] bg-white"
            >
              <Icon n="move" size="size-3" />
            </button>
          </div>
          <div className="flex w-[21px] shrink-0 flex-col items-center">
            <ScrollCap d={UP} label="Scroll up" />
            <div className="w-[19px] flex-1">
              <div className="h-[58px] bg-[#cdcdcd]" />
            </div>
            <ScrollCap d={DOWN} label="Scroll down" />
          </div>
        </div>
        <div className="flex h-5 shrink-0 items-center">
          <ScrollCap d={LEFT} label="Scroll left" />
          <div className="h-[18px] flex-1">
            <div className="h-full w-[279px] bg-[#cdcdcd]" />
          </div>
          <ScrollCap d={RIGHT} label="Scroll right" />
          <div className="w-5" />
        </div>
      </div>
    </main>
  );
}

/* ---------- output ---------- */

const logs: [string, string, boolean?][] = [
  ['[오후 10:15:06]', 'Add-In "Java AddIn" menu is registered successfully.'],
  ['[오후 10:15:06]', 'Add-In "Pattern AddIn" menu is registered successfully.'],
  ['[오후 10:15:06]', 'Add-In "Rose AddIn" menu is registered successfully.'],
  ['[오후 10:15:06]', 'Add-In "Standard AddIn" menu is registered successfully.'],
  ['[오후 10:15:06]', 'Add-In "XMI AddIn" menu is registered successfully.'],
  [
    '[오후 10:15:07]',
    'D:₩KH종로수업백업용₩2020.02.18~2020.08.20₩myjsp₩MyMVC₩UML₩UML실습하기₩UsecaseDiagram_실습순서캡쳐한것₩example.uml File reading complete.',
    true,
  ],
];

function BottomTab({ n, label, active }: { n: string; label: string; active?: boolean }) {
  return (
    <button
      role="tab"
      type="button"
      aria-selected={active ? 'true' : 'false'}
      className={
        active
          ? '-mt-px flex h-[26px] items-center gap-2 border-r-2 border-b-2 border-[#333] bg-[#f0f0f0] pl-1 pr-[10px]'
          : 'flex h-6 items-center gap-[6px] pl-1 text-[#777]'
      }
    >
      <Icon n={n} size="size-[18px]" />
      {label}
    </button>
  );
}

function OutputPanel() {
  return (
    <section className="mt-[6px] flex shrink-0 flex-col pl-[3px]">
      <PanelHeader title="Output" pin />
      <div className="mt-[2px] flex h-[118px] border border-[#a0a0a0] border-t-2 bg-white">
        <div className="flex-1 px-1 pt-[1px] font-['Noto_Sans','Noto_Sans_CJK_KR',sans-serif] whitespace-nowrap">
          {logs.map(([time, text, path]) => (
            <p key={text} className="flex h-4">
              <span className="w-[103px] shrink-0">{time}</span>
              <span className={path ? 'text-[14px] leading-4' : ''}>{text}</span>
            </p>
          ))}
        </div>
        <div className="flex w-[21px] flex-col items-center bg-[#f0f0f0]">
          <ScrollCap d={UP} label="Scroll output up" />
          <div className="flex w-[19px] flex-1 flex-col justify-end">
            <div className="h-[21px] bg-[#cdcdcd]" />
          </div>
          <ScrollCap d={DOWN} label="Scroll output down" />
        </div>
      </div>
      <div role="tablist" className="mt-[3px] flex h-[27px] items-start gap-px border-t border-[#333] bg-white pl-1">
        <BottomTab n="out" label="Output" active />
        <BottomTab n="msg" label="Message" />
        <div className="mt-[3px] ml-3 h-[18px] w-px bg-[#a0a0a0]" />
      </div>
    </section>
  );
}

/* ---------- model explorer ---------- */

type Node = { d: number; e?: '+' | '-'; n: string; t: string; v: string; sel?: boolean };

/* v holds one character per ancestor column: "|" draws the parent's connector through the row */
const nodes: Node[] = [
  { d: 0, e: '-', n: 'cube', t: 'Untitled', v: '' },
  { d: 1, e: '+', n: 'ucm', t: '<<useCaseModel>> Use Case Model', v: ' ' },
  { d: 1, e: '+', n: 'anm', t: '<<analysisModel>> Analysis Model', v: ' ' },
  { d: 1, e: '-', n: 'dsm', t: '<<designModel>> Design Model', v: ' ' },
  { d: 2, n: 'diagram', t: 'Main', v: ' |' },
  { d: 2, e: '+', n: 'subsystem', t: '쇼핑몰', v: ' |' },
  { d: 2, e: '+', n: 'class', t: 'MemberVO', v: ' |' },
  { d: 2, e: '+', n: 'class', t: '<<interface>> InterMemberDAO', v: ' |' },
  { d: 2, e: '-', n: 'classsel', t: 'AbstractController', v: ' |', sel: true },
  { d: 3, n: 'attr', t: 'isRedirect', v: ' | ' },
  { d: 3, n: 'attr', t: 'viewPage', v: ' | ' },
  { d: 1, e: '+', n: 'imm', t: '<<implementationModel>> Implementation Model', v: ' ' },
  { d: 1, e: '+', n: 'dpm', t: '<<deploymentModel>> Deployment Model', v: ' ' },
];

const Expander = ({ e, top }: { e?: '+' | '-'; top?: boolean }) => (
  <svg viewBox="0 0 22 23" className="h-full w-[22px] shrink-0" fill="none" aria-hidden="true">
    <path d={top ? 'M11 11.500h11' : 'M11.500 0v23M11 11.500h11'} stroke="#999" strokeDasharray="1 1" />
    {e && <rect x="6.500" y="6.500" width="10" height="10" rx="1" fill="#fff" stroke="#999" />}
    {e && <path d={e === '+' ? 'M8.500 11.500h6M11.500 8.500v6' : 'M8.500 11.500h6'} stroke="#35509a" strokeWidth="1.200" />}
  </svg>
);

function ToolSep() {
  return <div className="h-7 w-px bg-[#a0a0a0]" />;
}

function ModelExplorer() {
  return (
    <section className="flex shrink-0 flex-col">
      <PanelHeader title="Model Explorer" box pin active />
      <div className="flex h-[34px] items-center pl-[2px]">
        <button
          type="button"
          aria-label="Sort by order"
          className="flex h-7 w-[29px] items-center justify-center border border-[#2a86dc] bg-[#e4eef8]"
        >
          <Icon n="sort12" size="size-[18px]" />
        </button>
        <button type="button" aria-label="Sort by name" className="mr-[2px] flex h-7 w-[29px] items-center justify-center">
          <Icon n="sortab" size="size-[18px]" />
        </button>
        <ToolSep />
        <button type="button" aria-label="View options" className="flex h-7 w-[46px] items-center justify-center gap-1">
          <Icon n="view" />
          <Caret />
        </button>
        <ToolSep />
        <button type="button" aria-label="Filter" className="flex h-7 w-[36px] items-center justify-center">
          <Icon n="filter" />
        </button>
        <ToolSep />
        <button type="button" aria-label="Move up" className="flex h-7 w-[35px] items-center justify-center">
          <Icon n="up" size="size-4" />
        </button>
        <button type="button" aria-label="Move down" className="flex h-7 w-[22px] items-center justify-center">
          <Icon n="down" size="size-4" />
        </button>
      </div>
      <div className="flex flex-col border border-[#a0a0a0] border-t-2 bg-white">
        <ul role="tree" aria-label="Model" className="h-[301px] overflow-hidden">
          {nodes.map((x) => (
            <li key={x.t} role="treeitem" className="flex odd:h-[23px] even:h-[22px] items-center whitespace-nowrap">
              {x.v.split('').map((c, i) => (
                <span key={i} className="flex h-full w-[22px] shrink-0 justify-center">
                  {c === '|' && <span className="h-full border-l border-dotted border-[#999]" />}
                </span>
              ))}
              <Expander e={x.e} top={x.d === 0} />
              <span className="relative flex h-full items-center">
                <span className="flex w-8 justify-center">
                  <Icon n={x.n} size="size-[19px]" />
                </span>
                <span className={x.sel ? 'bg-[#0078d7] py-[3px] pl-[2px] pr-[6px] leading-4 text-white' : 'px-[2px]'}>{x.t}</span>
                {x.sel && <span className="absolute -inset-y-[3px] -right-1 -left-[2px] z-10 border-[3px] border-[#ed1c24]" />}
              </span>
            </li>
          ))}
        </ul>
        <div className="flex h-[21px] items-center bg-[#f0f0f0]">
          <ScrollCap d={LEFT} label="Scroll tree left" />
          <div className="h-[19px] flex-1">
            <div className="h-full w-[236px] bg-[#cdcdcd]" />
          </div>
          <ScrollCap d={RIGHT} label="Scroll tree right" />
        </div>
      </div>
      <div role="tablist" className="mt-[3px] flex h-[27px] items-start gap-px border-t border-[#333] bg-white pl-1">
        <BottomTab n="mexp" label="Model Explorer" active />
        <BottomTab n="dexp" label="Diagram Explorer" />
        <div className="mt-[3px] ml-3 h-[18px] w-px bg-[#a0a0a0]" />
      </div>
    </section>
  );
}

/* ---------- properties ---------- */

type Row = { i: string; k: string; v?: React.ReactNode; check?: boolean; on?: boolean };

const general: Row[] = [
  { i: 'diamond', k: 'Name', v: 'AbstractController' },
  { i: 'diamond', k: 'Stereotype' },
  {
    i: 'tri',
    k: 'Visibility',
    v: (
      <span className="flex items-center gap-1">
        <Icon n="pub" size="size-4" />
        PUBLIC
      </span>
    ),
  },
  { i: 'diamond', k: 'IsAbstract', check: true, on: true },
  { i: 'coll', k: 'Attributes', v: '(Collection)[2]' },
  { i: 'coll', k: 'Operations', v: '(Collection)[0]' },
];

const detail: Row[] = [
  { i: 'diamond', k: 'IsSpecification', check: true },
  { i: 'diamond', k: 'IsRoot', check: true },
  { i: 'diamond', k: 'IsLeaf', check: true },
  { i: 'coll', k: 'TemplateParameters', v: '(Collection)[0]' },
  { i: 'diamond', k: 'IsActive', check: true },
];

function PropRow({ r }: { r: Row }) {
  const id = `prop-${r.k}`;
  return (
    <tr className="h-[21px]">
      <td className="border-r border-[#a0a0a0] bg-[#f0f0f0] p-0" />
      <th scope="row" className="overflow-hidden border-r border-b border-[#ececec] p-0 text-left font-normal">
        <label htmlFor={r.check ? id : undefined} className="flex h-5 items-center gap-[5px] pr-[2px] pl-6 whitespace-nowrap">
          <Icon n={r.i} size="size-[11px]" />
          <span className="min-w-0 overflow-hidden">{r.k}</span>
        </label>
      </th>
      <td className="border-b border-[#ececec] p-0 pl-[2px] whitespace-nowrap">
        {r.check ? (
          <span className="relative flex h-5 items-center justify-center">
            <input
              id={id}
              type="checkbox"
              defaultChecked={r.on}
              className="size-4 appearance-none border border-[#aaa] bg-white"
            />
            {r.on && (
              <>
                <svg viewBox="0 0 12 12" className="pointer-events-none absolute size-3" fill="none">
                  <path d="M2 5l3 4 5-7" stroke="#000" strokeWidth="2.400" />
                </svg>
                <span className="pointer-events-none absolute z-10 h-[31px] w-10 border-[5px] border-[#ed1c24]" />
              </>
            )}
          </span>
        ) : (
          <div className="flex h-5 items-center">{r.v}</div>
        )}
      </td>
    </tr>
  );
}

const GroupRow = ({ title, active }: { title: string; active?: boolean }) => (
  <tr className="h-[23px]">
    <td className="border-t border-[#a0a0a0] bg-[#f0f0f0] p-0">
      <button
        type="button"
        aria-label={`Collapse ${title}`}
        className="ml-1 flex size-3 items-center justify-center border border-[#333]"
      >
        <span className="h-px w-[6px] bg-[#333]" />
      </button>
    </td>
    <th
      scope="colgroup"
      colSpan={2}
      className={`border-t border-[#a0a0a0] p-0 pl-[2px] text-left text-[14px] leading-4 font-bold ${
        active ? 'bg-[#0078d7] text-white' : 'border-b bg-[#f0f0f0]'
      }`}
    >
      {title}
    </th>
  </tr>
);

function Properties() {
  return (
    <section className="mt-[5px] flex min-h-0 flex-1 flex-col">
      <PanelHeader title="Properties" box pin />
      <div className="mt-[5px] flex h-[21px] shrink-0 items-center border border-[#a0a0a0] px-1 text-[14px] font-bold">
        (UMLClass) AbstractController
      </div>
      <div className="mt-[2px] min-h-0 flex-1 border border-[#a0a0a0] bg-white">
        <table className="w-full table-fixed border-separate border-spacing-0 border-b border-[#a0a0a0]">
          <colgroup>
            <col className="w-[19px]" />
            <col className="w-[145px]" />
            <col />
          </colgroup>
          <tbody>
            <GroupRow title="General" active />
            {general.map((r) => (
              <PropRow key={r.k} r={r} />
            ))}
            <GroupRow title="Detail" />
            {detail.map((r) => (
              <PropRow key={r.k} r={r} />
            ))}
          </tbody>
        </table>
      </div>
      <div role="tablist" className="mt-[3px] flex h-[27px] shrink-0 items-start gap-px border-t border-[#333] bg-white pl-1">
        <BottomTab n="props" label="Properties" active />
        <BottomTab n="documentation" label="Documentation" />
        <div className="mt-[3px] ml-3 h-[18px] w-px bg-[#a0a0a0]" />
        <BottomTab n="attach" label="At" />
        <button type="button" aria-label="Previous tabs" className="ml-[10px] mt-[5px]">
          <svg viewBox="0 0 8 12" className="h-3 w-[7px]" fill="none">
            <path d="M7 1v10L1 6z" stroke="#888" />
          </svg>
        </button>
        <button type="button" aria-label="Next tabs" className="ml-3 mt-[5px]">
          <svg viewBox="0 0 8 12" className="h-3 w-[7px]">
            <path d="M1 0v12l7-6z" fill="#888" />
          </svg>
        </button>
      </div>
    </section>
  );
}

/* ---------- page ---------- */

export default function App() {
  return (
    <div className="flex h-screen flex-col overflow-hidden bg-[#f0f0f0] font-['DejaVu_Sans_Condensed','Noto_Sans_CJK_KR',sans-serif] text-[13px] leading-4 text-[#1a1a1a]">
      <TitleBar />
      <MenuBar />
      <Toolbars />
      <div className="flex min-h-0 flex-1">
        <div className="flex min-w-0 flex-1 flex-col">
          <div className="flex min-h-0 flex-1">
            <Toolbox />
            <DiagramArea />
          </div>
          <OutputPanel />
        </div>
        <div className="ml-[6px] mr-[3px] flex w-[330px] shrink-0 flex-col">
          <ModelExplorer />
          <Properties />
        </div>
      </div>
      <footer className="mt-[5px] flex h-6 shrink-0 gap-[3px] pb-px text-[14px]">
        <div className="flex w-[85px] items-center border border-[#b4b4b4] pl-3">Modified</div>
        <div className="w-[122px] border border-[#b4b4b4]" />
        <div className="flex flex-1 items-center border border-[#b4b4b4] pl-[6px] font-['Noto_Sans',sans-serif]">
          (UMLClass) ::Design Model::AbstractController
        </div>
      </footer>
    </div>
  );
}
